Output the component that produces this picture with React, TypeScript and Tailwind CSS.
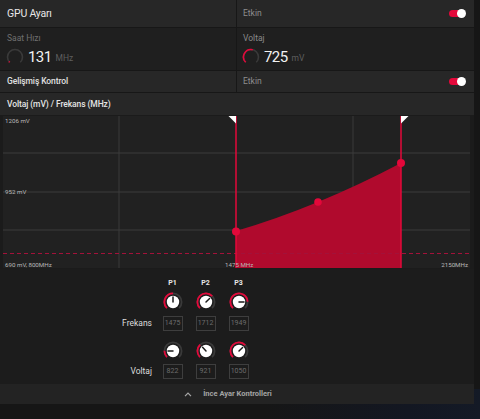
import React from "react";

const RED = "#e3083a";

function pt(cx: number, cy: number, r: number, deg: number) {
  const a = (deg * Math.PI) / 180;
  return [cx + r * Math.sin(a), cy - r * Math.cos(a)];
}
function arc(cx: number, cy: number, r: number, a1: number, a2: number) {
  const [x1, y1] = pt(cx, cy, r, a1);
  const [x2, y2] = pt(cx, cy, r, a2);
  const large = a2 - a1 > 180 ? 1 : 0;
  return `M${x1.toFixed(2)},${y1.toFixed(2)} A${r},${r} 0 ${large} 1 ${x2.toFixed(2)},${y2.toFixed(2)}`;
}

function Gauge({ f }: { f: number }) {
  const end = -135 + 270 * f;
  return (
    <svg width="18" height="18" viewBox="0 0 18 18">
      <path d={arc(9, 9, 7.5, -135, 135)} stroke="#3a3a3a" strokeWidth="1.6" fill="none" />
      <path d={arc(9, 9, 7.5, -135, end)} stroke={RED} strokeWidth="1.6" fill="none" />
    </svg>
  );
}

function Knob({ f }: { f: number }) {
  const ang = -135 + 270 * f;
  const [px, py] = pt(10, 10, 5, ang);
  return (
    <svg width="20" height="20" viewBox="0 0 20 20">
      <path d={arc(10, 10, 8.6, -135, 135)} stroke="#3a3a3a" strokeWidth="1.8" fill="none" />
      <path d={arc(10, 10, 8.6, -135, ang)} stroke={RED} strokeWidth="1.8" fill="none" />
      <circle cx="10" cy="10" r="6.2" fill="#ffffff" />
      <line x1="10" y1="10" x2={px} y2={py} stroke="#1a1a1a" strokeWidth="1.5" strokeLinecap="round" />
    </svg>
  );
}

function Toggle() {
  return (
    <div className="relative w-[17px] h-[9px] flex items-center">
      <div className="w-[16px] h-[7px] rounded-full bg-[#e3083a]" />
      <div className="absolute right-0 top-[0px] w-[9px] h-[9px] rounded-full bg-white" />
    </div>
  );
}

function ValBox({ v }: { v: string }) {
  return (
    <div className="w-[20px] h-[15px] border border-[#3e3e3e] flex items-center justify-center text-[7px] text-[#6c6c6c] leading-none">
      {v}
    </div>
  );
}

function Chart() {
  const W = 467;
  const H = 152;
  return (
    <svg width={W} height={H} viewBox={`0 0 ${W} ${H}`} className="block">
      <rect x="0" y="0" width={W} height={H} fill="#212121" />
      {[37, 76, 114].map((y) => (
        <line key={y} x1="0" y1={y} x2={W} y2={y} stroke="#3d3d3d" strokeWidth="1" />
      ))}
      {[116, 350].map((x) => (
        <line key={x} x1={x} y1="0" x2={x} y2={H} stroke="#3a3a3a" strokeWidth="1" />
      ))}
      <path d="M233,152 L233,115 Q314.5,91 398,47 L398,152 Z" fill="#b00a2d" />
      <line x1="0" y1="137.5" x2={W} y2="137.5" stroke="#a3123a" strokeWidth="1" strokeDasharray="4 3" />
      <line x1="233" y1="0" x2="233" y2={H} stroke={RED} strokeWidth="1.5" />
      <line x1="398" y1="0" x2="398" y2={H} stroke={RED} strokeWidth="1.5" />
      <polygon points="225.5,0 233,0 233,7.5" fill="#ffffff" />
      <polygon points="398,0 405.5,0 398,7.5" fill="#ffffff" />
      <circle cx="233" cy="115.5" r="4" fill={RED} />
      <circle cx="315" cy="86" r="3.8" fill={RED} />
      <circle cx="398" cy="47" r="4" fill={RED} />
      <g fontFamily="Roboto, sans-serif" fontSize="6.2" fill="#b8b8b8">
        <text x="2" y="6.5">1206 mV</text>
        <text x="2" y="78">952 mV</text>
        <text x="2" y="150.5">690 mV, 800MHz</text>
        <text x="222" y="150.5">1475 MHz</text>
        <text x="465" y="150.5" textAnchor="end">2150MHz</text>
      </g>
    </svg>
  );
}

export default function App() {
  return (
    <div className="w-[480px] h-[419px] bg-[#161616] font-['Roboto',sans-serif] overflow-hidden relative">
      <div className="absolute inset-x-0 bottom-0 h-[30px] bg-[linear-gradient(90deg,#161616_0%,#161616_55%,#131722_85%,#141a26_100%)]" />
      <div className="relative w-[474px] flex flex-col bg-[#171717]">
        {/* Row 1 */}
        <div className="flex h-[27px]">
          <div className="w-[236px] bg-[#272727] flex items-center pl-[7px] text-[10.5px] text-[#e8e8e8] tracking-[-0.2px]">
            GPU Ayarı
          </div>
          <div className="w-[1px]" />
          <div className="flex-1 bg-[#272727] flex items-center justify-between pl-[6px] pr-[8px] text-[8.5px] text-[#8e8e8e]">
            <span>Etkin</span>
            <Toggle />
          </div>
        </div>
        <div className="h-[1px]" />
        {/* Row 2 */}
        <div className="flex h-[42px]">
          <div className="w-[236px] bg-[#1f1f1f] flex flex-col pl-[6px] pt-[5px]">
            <div className="text-[8.5px] text-[#6f6f6f] pl-[1px] leading-[10px]">Saat Hızı</div>
            <div className="flex items-center mt-[5px] gap-[4px]">
              <Gauge f={0.03} />
              <span className="text-[15px] text-[#f2f2f2] leading-none tracking-[-0.6px]">131</span>
              <span className="text-[8.5px] text-[#5e5e5e] mt-[3px]">MHz</span>
            </div>
          </div>
          <div className="w-[1px]" />
          <div className="flex-1 bg-[#1f1f1f] flex flex-col pl-[5px] pt-[5px]">
            <div className="text-[8.5px] text-[#8a8a8a] pl-[1px] leading-[10px]">Voltaj</div>
            <div className="flex items-center mt-[5px] gap-[4px]">
              <Gauge f={0.55} />
              <span className="text-[15px] text-[#f2f2f2] leading-none tracking-[-0.6px]">725</span>
              <span className="text-[8.5px] text-[#5e5e5e] mt-[3px]">mV</span>
            </div>
          </div>
        </div>
        <div className="h-[1px]" />
        {/* Row 3 */}
        <div className="flex h-[21px]">
          <div className="w-[236px] bg-[#272727] flex items-center pl-[7px] text-[8.5px] text-[#e0e0e0] font-medium tracking-[-0.1px]">
            Gelişmiş Kontrol
          </div>
          <div className="w-[1px]" />
          <div className="flex-1 bg-[#272727] flex items-center justify-between pl-[6px] pr-[8px] text-[8.5px] text-[#8e8e8e]">
            <span>Etkin</span>
            <Toggle />
          </div>
        </div>
        <div className="h-[1px]" />
        {/* Row 4 */}
        <div className="h-[22px] bg-[#272727] flex items-center pl-[7px] text-[8.5px] text-[#e4e4e4] font-medium tracking-[-0.1px]">
          Voltaj (mV) / Frekans (MHz)
        </div>
        {/* Chart */}
        <div className="bg-[#1b1b1b] pt-[1px] pb-[1px] pl-[3px] pr-[4px]">
          <Chart />
        </div>
        {/* Knobs */}
        <div className="bg-[#1c1c1c] h-[115px] pt-[9px]">
          <div className="grid grid-cols-[156px_33px_33px_33px]">
            <div />
            {["P1", "P2", "P3"].map((p) => (
              <div key={p} className="h-[10px] flex items-center justify-center text-[7px] font-bold text-[#e8e8e8]">
                {p}
              </div>
            ))}
            <div />
            {[0.5, 0.67, 0.83].map((f, i) => (
              <div key={i} className="mt-[4px] flex justify-center">
                <Knob f={f} />
              </div>
            ))}
            <div className="mt-[4px] flex items-center justify-end pr-[4px] text-[8.5px] text-[#dcdcdc]">Frekans</div>
            {["1475", "1712", "1949"].map((v) => (
              <div key={v} className="mt-[4px] flex justify-center">
                <ValBox v={v} />
              </div>
            ))}
            <div />
            {[0.17, 0.34, 0.67].map((f, i) => (
              <div key={i} className="mt-[10px] flex justify-center">
                <Knob f={f} />
              </div>
            ))}
            <div className="mt-[3px] flex items-center justify-end pr-[4px] text-[8.5px] text-[#dcdcdc]">Voltaj</div>
            {["822", "921", "1050"].map((v) => (
              <div key={v} className="mt-[3px] flex justify-center">
                <ValBox v={v} />
              </div>
            ))}
          </div>
        </div>
        {/* Bottom bar */}
        <div className="h-[20px] bg-[#232323] flex items-center justify-center pr-[18px] gap-[11px]">
          <svg width="8" height="5" viewBox="0 0 8 5">
            <polyline points="1,4.2 4,1.2 7,4.2" fill="none" stroke="#a8a8a8" strokeWidth="1.2" />
          </svg>
          <span className="text-[7.5px] font-bold text-[#a4a4a4]">İnce Ayar Kontrolleri</span>
        </div>
      </div>
    </div>
  );
}
